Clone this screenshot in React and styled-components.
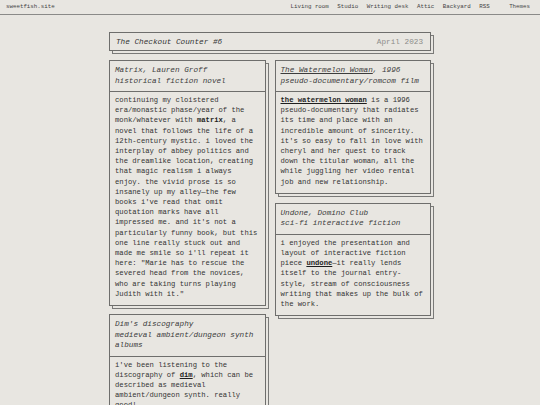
import React from "react";
import styled, { createGlobalStyle } from "styled-components";

const Global = createGlobalStyle`
  html, body { margin: 0; padding: 0; background: #e8e6e1; }
  body { font-family: "Liberation Mono", "DejaVu Sans Mono", monospace; color: #333; }
  * { box-sizing: border-box; }
`;

const TopBar = styled.header`
  display: flex;
  justify-content: space-between;
  align-items: center;
  height: 15px;
  padding: 0 10px 1px 6px;
  border-bottom: 1px solid #8a8a88;
  font-size: 5.8px;
  color: #444;
`;

const Nav = styled.nav`
  display: flex;
  align-items: center;
  gap: 8.5px;
`;

const NavLink = styled.span`
  margin-left: ${(p) => (p.$wide ? "11px" : "0")};
`;

const Main = styled.main`
  width: 322px;
  margin: 17px auto 0;
  display: flex;
  flex-direction: column;
  gap: 9px;
`;

const boxShadow = `3px 3px 0 -1px #e8e6e1, 3px 3px 0 0 #7a7a78`;

const TitleBox = styled.div`
  display: flex;
  justify-content: space-between;
  align-items: center;
  height: 19px;
  padding: 0 7px 0 6px;
  border: 1px solid #6e6e6c;
  background: #e8e6e1;
  box-shadow: ${boxShadow};
  font-size: 7.7px;
`;

const Title = styled.span`
  font-style: italic;
  color: #333;
`;

const DateText = styled.span`
  color: #8d8d8a;
`;

const Columns = styled.div`
  display: flex;
  gap: 9px;
  align-items: flex-start;
`;

const Column = styled.div`
  width: 157px;
  display: flex;
  flex-direction: column;
  gap: ${(p) => p.$gap || "8px"};
`;

const Card = styled.article`
  border: 1px solid #6e6e6c;
  background: #e8e6e1;
  box-shadow: ${boxShadow};
`;

const CardHead = styled.div`
  padding: 4px 5px 5px 5px;
  border-bottom: 1px solid #6e6e6c;
  font-size: 7.7px;
  line-height: 10.5px;
  font-style: italic;
  color: #3c3c3c;
`;

const HeadLine = styled.div``;

const U = styled.span`
  text-decoration: underline;
`;

const CardBody = styled.div`
  padding: 3px 5px 6px 5px;
  font-size: 7.2px;
  line-height: 10.2px;
  color: #333;
`;

const Strong = styled.b`
  font-weight: bold;
  color: #1e1e1e;
  text-decoration: ${(p) => (p.$link ? "underline" : "none")};
`;

export default function App() {
  return (
    <>
      <Global />
      <TopBar>
        <span>sweetfish.site</span>
        <Nav>
          <NavLink>Living room</NavLink>
          <NavLink>Studio</NavLink>
          <NavLink>Writing desk</NavLink>
          <NavLink>Attic</NavLink>
          <NavLink>Backyard</NavLink>
          <NavLink>RSS</NavLink>
          <NavLink $wide>Themes</NavLink>
        </Nav>
      </TopBar>
      <Main>
        <TitleBox>
          <Title>The Checkout Counter #6</Title>
          <DateText>April 2023</DateText>
        </TitleBox>
        <Columns>
          <Column>
            <Card>
              <CardHead>
                <HeadLine>Matrix, Lauren Groff</HeadLine>
                <HeadLine>historical fiction novel</HeadLine>
              </CardHead>
              <CardBody>
                continuing my cloistered era/monastic phase/year of the
                monk/whatever with <Strong>matrix</Strong>, a novel that
                follows the life of a 12th-century mystic. i loved the
                interplay of abbey politics and the dreamlike location,
                creating that magic realism i always enjoy. the vivid prose is
                so insanely up my alley—the few books i've read that omit
                quotation marks have all impressed me. and it's not a
                particularly funny book, but this one line really stuck out
                and made me smile so i'll repeat it here: "Marie has to rescue
                the severed head from the novices, who are taking turns
                playing Judith with it."
              </CardBody>
            </Card>
            <Card>
              <CardHead>
                <HeadLine>Dim's discography</HeadLine>
                <HeadLine>medieval ambient/dungeon synth albums</HeadLine>
              </CardHead>
              <CardBody>
                i've been listening to the discography of{" "}
                <Strong $link>dim</Strong>, which can be described as medieval
                ambient/dungeon synth. really good!
              </CardBody>
            </Card>
          </Column>
          <Column $gap="9px">
            <Card>
              <CardHead>
                <HeadLine>
                  <U>The Watermelon Woman</U>, 1996
                </HeadLine>
                <HeadLine>pseudo-documentary/romcom film</HeadLine>
              </CardHead>
              <CardBody>
                <Strong $link>the watermelon woman</Strong> is a 1996
                pseudo-documentary that radiates its time and place with an
                incredible amount of sincerity. it's so easy to fall in love
                with cheryl and her quest to track down the titular woman, all
                the while juggling her video rental job and new relationship.
              </CardBody>
            </Card>
            <Card>
              <CardHead>
                <HeadLine>Undone, Domino Club</HeadLine>
                <HeadLine>sci-fi interactive fiction</HeadLine>
              </CardHead>
              <CardBody>
                i enjoyed the presentation and layout of interactive fiction
                piece <Strong $link>undone</Strong>—it really lends itself to
                the journal entry-style, stream of consciousness writing that
                makes up the bulk of the work.
              </CardBody>
            </Card>
          </Column>
        </Columns>
      </Main>
    </>
  );
}
